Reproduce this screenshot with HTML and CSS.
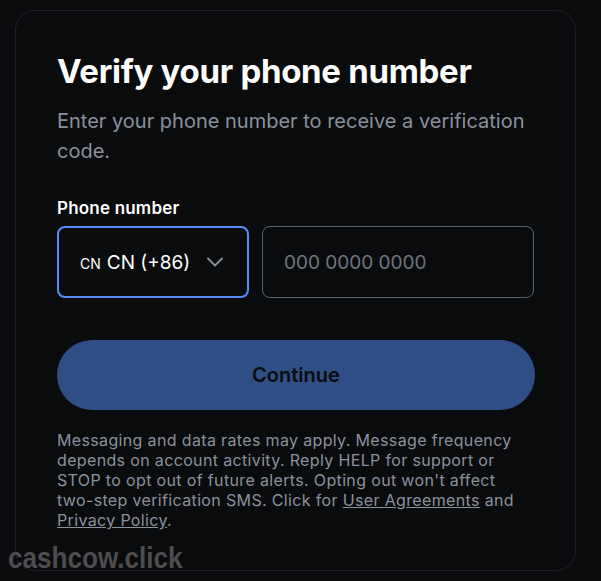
FILE: index.html
```html
<!DOCTYPE html>
<html lang="en">
<head>
    <meta charset="UTF-8">
    <meta name="viewport" content="width=device-width, initial-scale=1.0">
    <title>Verify your phone number</title>
    <link rel="stylesheet" href="styles.css">
</head>
<body>
    <div class="card">
        <h1>Verify your phone number</h1>
        <p class="subtitle">Enter your phone number to receive a verification code.</p>

        <label class="field-label" for="phoneInput">Phone number</label>
        <div class="phone-row">
            <div class="country-select">
                <span class="country-code">CN</span>
                <span class="country-name">CN (+86)</span>
                <svg class="chevron" width="16" height="10" viewBox="0 0 16 10" fill="none">
                    <path d="M1 1.5 L8 8.5 L15 1.5" stroke="#8a919e" stroke-width="1.8" stroke-linecap="round" stroke-linejoin="round"/>
                </svg>
            </div>
            <input type="text" id="phoneInput" class="phone-input" placeholder="000 0000 0000">
        </div>

        <button class="continue-btn">Continue</button>

        <p class="legal">
            Messaging and data rates may apply. Message frequency depends on account activity. Reply HELP for support or STOP to opt out of future alerts. Opting out won't affect two-step verification SMS. Click for <a href="#">User Agreements</a> and <a href="#">Privacy Policy</a>.
        </p>
    </div>

    <div class="watermark">cashcow.click</div>
</body>
</html>
```

FILE: styles.css
```css
:root {
    --bg: #0a0b0d;
    --border: #1e2025;
    --muted: #8a919e;
    --blue: #578bfa;
    --btn: #2f4e85;
}

* {
    box-sizing: border-box;
    margin: 0;
    padding: 0;
}

body {
    background: var(--bg);
    font-family: Inter, 'Noto Sans', sans-serif;
    color: #fff;
    min-height: 100vh;
    position: relative;
    overflow: hidden;
}

.card {
    margin: 10px 25px 0 15px;
    border: 1px solid var(--border);
    border-radius: 20px;
    padding: 40px 41px 40px 41px;
    min-height: 561px;
}

h1 {
    font-size: 33px;
    line-height: 40px;
    font-weight: 700;
    letter-spacing: -0.3px;
}

.subtitle {
    margin-top: 15px;
    font-size: 20px;
    line-height: 30px;
    color: var(--muted);
}

.field-label {
    display: block;
    margin-top: 30px;
    font-size: 17px;
    line-height: 24px;
    font-weight: 600;
    letter-spacing: 0.2px;
}

.phone-row {
    display: flex;
    gap: 13px;
    margin-top: 6px;
}

.country-select {
    width: 192px;
    height: 72px;
    border: 2px solid var(--blue);
    border-radius: 8px;
    display: flex;
    align-items: center;
    padding-left: 21px;
}

.country-code {
    font-size: 14px;
    margin-right: 6px;
    margin-top: 2px;
}

.country-name {
    font-size: 19px;
}

.chevron {
    margin-left: 17px;
}

.phone-input {
    width: 272px;
    height: 72px;
    background: transparent;
    border: 1px solid #5b616e;
    border-radius: 8px;
    padding-left: 21px;
    font-family: inherit;
    font-size: 19px;
    color: #fff;
}

.phone-input::placeholder {
    color: #6f7580;
}

.continue-btn {
    display: block;
    width: 478px;
    height: 70px;
    margin-top: 42px;
    border: none;
    border-radius: 35px;
    background: var(--btn);
    font-family: inherit;
    font-size: 20px;
    font-weight: 600;
    color: var(--bg);
}

.legal {
    margin-top: 20px;
    font-size: 16px;
    line-height: 20px;
    letter-spacing: 0.35px;
    color: var(--muted);
    width: 478px;
}

.legal a {
    color: var(--muted);
    text-decoration: underline;
}

.watermark {
    position: absolute;
    left: 8px;
    top: 541px;
    font-family: 'Liberation Sans', Arial, sans-serif;
    font-weight: 700;
    font-size: 30px;
    color: #4d4d4f;
    transform: scaleX(0.87);
    transform-origin: left top;
}
```
